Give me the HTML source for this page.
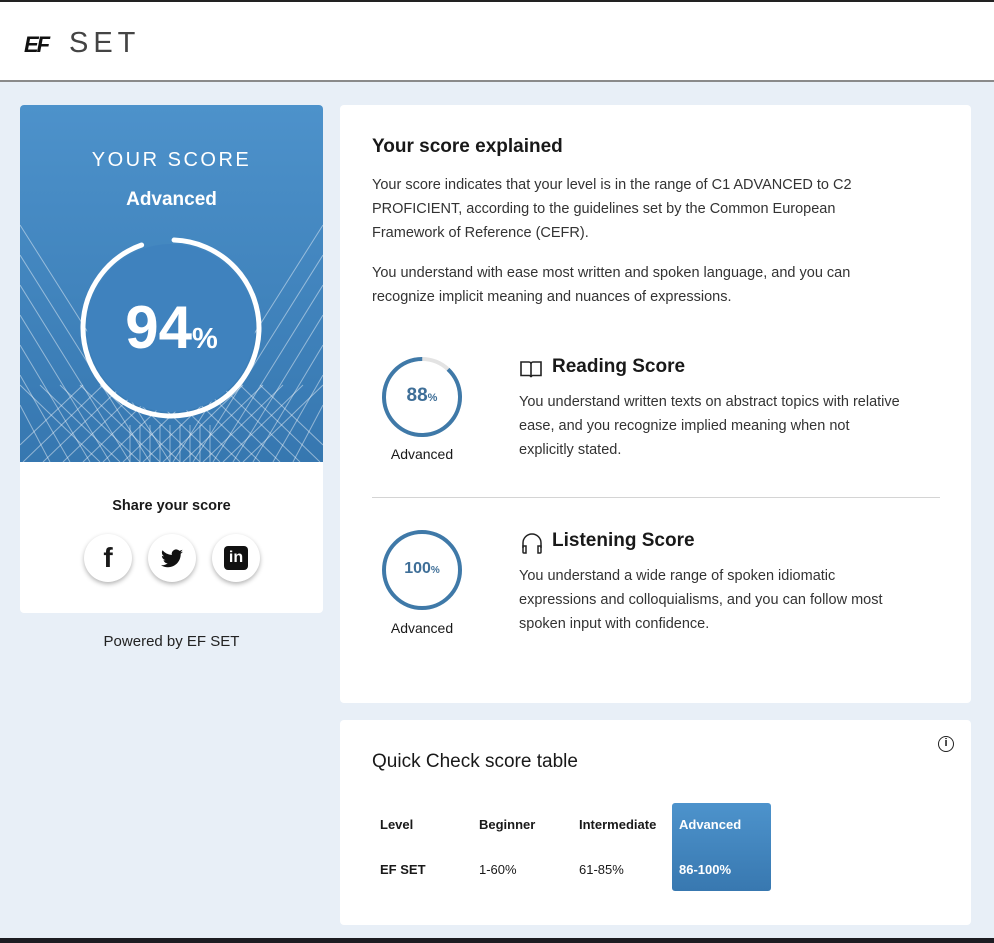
<!DOCTYPE html>
<html><head><meta charset="utf-8"><style>
*{margin:0;padding:0;box-sizing:border-box}
body{width:994px;height:943px;background:#e8eff7;font-family:"Liberation Sans",sans-serif;color:#191919;position:relative;overflow:hidden}
.top{position:absolute;left:0;top:0;width:994px;height:2px;background:#222}
.hdr{position:absolute;left:0;top:2px;width:994px;height:80px;background:#fff;border-bottom:2px solid #8a8a8a}
.card{position:absolute;background:#fff;border-radius:4px}
.p{font-size:14.5px;line-height:24px;color:#333;white-space:nowrap}
.bot{position:absolute;left:0;top:938px;width:994px;height:5px;background:#1c1c22}
</style></head><body>
<div class="top"></div>
<div class="hdr">
 <div style="position:absolute;left:24px;top:30px;font-size:22px;font-weight:bold;font-style:italic;letter-spacing:-2px;color:#111">EF</div>
 <div style="position:absolute;left:69px;top:25px;font-size:29px;font-weight:300;letter-spacing:5px;color:#444">SET</div>
</div>
<div class="card" style="left:20px;top:105px;width:303px;height:508px;overflow:hidden">
 <div style="position:absolute;left:0;top:0;width:303px;height:357px;background:linear-gradient(#4d92cb,#3677b0)">
  <svg width="303" height="357" style="position:absolute;left:0;top:0" stroke="rgba(255,255,255,0.45)" stroke-width="1" fill="none">
   <g>
    <path d="M0 120 L150 357 M0 150 L130 357 M0 180 L110 357 M0 210 L90 357 M0 240 L70 357 M0 270 L50 357 M0 300 L30 357"/>
    <path d="M303 120 L153 357 M303 150 L173 357 M303 180 L193 357 M303 210 L213 357 M303 240 L233 357 M303 270 L253 357 M303 300 L273 357"/>
    <path d="M0 280 L80 357 M20 280 L100 357 M40 280 L120 357 M60 280 L140 357 M80 280 L160 357 M100 280 L180 357 M120 280 L200 357 M140 280 L220 357 M160 280 L240 357 M180 280 L260 357 M200 280 L280 357 M220 280 L300 357 M240 280 L303 340"/>
    <path d="M303 280 L223 357 M283 280 L203 357 M263 280 L183 357 M243 280 L163 357 M223 280 L143 357 M203 280 L123 357 M183 280 L103 357 M163 280 L83 357 M143 280 L63 357 M123 280 L43 357 M103 280 L23 357 M83 280 L3 357 M63 280 L0 340"/>
    <path d="M110 320 V357 M120 320 V357 M130 320 V357 M140 320 V357 M150 320 V357 M160 320 V357 M170 320 V357 M180 320 V357 M190 320 V357"/>
   </g>
  </svg>
  <div style="position:absolute;left:0;width:303px;top:44px;text-align:center;color:#fff;font-size:20px;letter-spacing:2.5px">YOUR SCORE</div>
  <div style="position:absolute;left:0;width:303px;top:84px;text-align:center;color:#fff;font-size:19px;font-weight:bold">Advanced</div>
  <svg width="190" height="190" style="position:absolute;left:56px;top:128px">
   <circle cx="95" cy="95" r="84" fill="#3f82be"/>
   <circle cx="95" cy="95" r="88" fill="none" stroke="#fff" stroke-width="5" stroke-dasharray="519.7 552.9" transform="rotate(-88 95 95)" stroke-linecap="round"/>
  </svg>
  <div style="position:absolute;left:0;width:303px;top:188px;text-align:center;color:#fff;font-weight:bold"><span style="font-size:60px">94</span><span style="font-size:29px">%</span></div>
 </div>
 <div style="position:absolute;left:0;width:303px;top:393px;text-align:center;font-size:14.5px;font-weight:bold">Share your score</div>
 <div style="position:absolute;left:64px;top:429px;width:48px;height:48px;border-radius:50%;background:#fff;box-shadow:0 2px 5px rgba(0,0,0,.3);text-align:center;font-size:28px;font-weight:bold;line-height:48px">f</div>
 <div style="position:absolute;left:128px;top:429px;width:48px;height:48px;border-radius:50%;background:#fff;box-shadow:0 2px 5px rgba(0,0,0,.3)">
  <svg width="24" height="24" viewBox="0 0 24 24" style="position:absolute;left:12px;top:13px"><path fill="#111" d="M23 4.6c-.8.4-1.7.6-2.6.7.9-.6 1.6-1.4 2-2.5-.9.5-1.9.9-2.9 1.1A4.5 4.5 0 0 0 11.8 8 12.8 12.8 0 0 1 2.5 3.3a4.5 4.5 0 0 0 1.4 6c-.7 0-1.4-.2-2-.6 0 2.2 1.6 4 3.6 4.4-.7.2-1.4.2-2 .1.6 1.8 2.2 3.1 4.2 3.1A9 9 0 0 1 1 18.2 12.8 12.8 0 0 0 7.9 20.2c8.3 0 12.8-6.9 12.8-12.8v-.6c.9-.6 1.6-1.4 2.3-2.2z"/></svg>
 </div>
 <div style="position:absolute;left:192px;top:429px;width:48px;height:48px;border-radius:50%;background:#fff;box-shadow:0 2px 5px rgba(0,0,0,.3)">
  <div style="position:absolute;left:12px;top:12px;width:24px;height:24px;border-radius:4px;background:#111;color:#fff;font-weight:bold;font-size:16px;text-align:center;line-height:24px">in</div>
 </div>
</div>
<div style="position:absolute;left:20px;width:303px;top:633px;text-align:center;font-size:15px;color:#222">Powered by EF SET</div>

<div class="card" style="left:340px;top:105px;width:631px;height:598px">
 <div style="position:absolute;left:32px;top:31px;font-size:19px;font-weight:bold">Your score explained</div>
 <div class="p" style="position:absolute;left:32px;top:68px">Your score indicates that your level is in the range of C1 ADVANCED to C2<br>PROFICIENT, according to the guidelines set by the Common European<br>Framework of Reference (CEFR).</div>
 <div class="p" style="position:absolute;left:32px;top:156px">You understand with ease most written and spoken language, and you can<br>recognize implicit meaning and nuances of expressions.</div>
 <svg width="84" height="84" style="position:absolute;left:40px;top:250px">
  <circle cx="42" cy="42" r="38" fill="none" stroke="#e3e3e3" stroke-width="4"/>
  <circle cx="42" cy="42" r="38" fill="none" stroke="#3f79a8" stroke-width="4" stroke-dasharray="210 239" transform="rotate(-46.8 42 42)"/>
 </svg>
 <div style="position:absolute;left:40px;width:84px;top:280px;text-align:center;color:#3f6f98;font-weight:bold"><span style="font-size:19px">88</span><span style="font-size:11px">%</span></div>
 <div style="position:absolute;left:32px;width:100px;top:341px;text-align:center;font-size:14px">Advanced</div>
 <svg width="22" height="20" viewBox="0 0 22 20" style="position:absolute;left:180px;top:254px" fill="none" stroke="#222" stroke-width="1.6"><path d="M1 3h8a2 2 0 0 1 2 2v13a2 2 0 0 0-2-1.5H1z M21 3h-8a2 2 0 0 0-2 2v13a2 2 0 0 1 2-1.5h8z"/></svg>
 <div style="position:absolute;left:212px;top:251px;font-size:19px;font-weight:bold">Reading Score</div>
 <div class="p" style="position:absolute;left:179px;top:285px">You understand written texts on abstract topics with relative<br>ease, and you recognize implied meaning when not<br>explicitly stated.</div>
 <div style="position:absolute;left:32px;top:392px;width:568px;height:1px;background:#d4d4d4"></div>
 <svg width="84" height="84" style="position:absolute;left:40px;top:423px"><circle cx="42" cy="42" r="38" fill="none" stroke="#3f79a8" stroke-width="4"/></svg>
 <div style="position:absolute;left:40px;width:84px;top:455px;text-align:center;color:#3f6f98;font-weight:bold"><span style="font-size:16px">100</span><span style="font-size:10px">%</span></div>
 <div style="position:absolute;left:32px;width:100px;top:515px;text-align:center;font-size:14px">Advanced</div>
 <svg width="24" height="24" viewBox="0 0 24 24" style="position:absolute;left:180px;top:426px" fill="none" stroke="#222" stroke-width="1.5"><path d="M3 17v-5a9 9 0 0 1 18 0v5"/><path d="M3 15h3v7H4a1 1 0 0 1-1-1z M21 15h-3v7h2a1 1 0 0 0 1-1z"/></svg>
 <div style="position:absolute;left:212px;top:425px;font-size:19px;font-weight:bold">Listening Score</div>
 <div class="p" style="position:absolute;left:179px;top:459px">You understand a wide range of spoken idiomatic<br>expressions and colloquialisms, and you can follow most<br>spoken input with confidence.</div>
</div>

<div class="card" style="left:340px;top:720px;width:631px;height:205px">
 <div style="position:absolute;left:598px;top:16px;width:16px;height:16px;border:1.5px solid #222;border-radius:50%;font-size:11px;text-align:center;line-height:13px;font-weight:bold">i</div>
 <div style="position:absolute;left:32px;top:31px;font-size:19px;font-weight:500">Quick Check score table</div>
 <div style="position:absolute;left:332px;top:83px;width:99px;height:88px;border-radius:3px;background:linear-gradient(#4d93cc,#3878b0)"></div>
 <div style="position:absolute;top:97px;left:40px;font-size:13px;font-weight:bold">Level</div>
 <div style="position:absolute;top:97px;left:139px;font-size:13px;font-weight:bold">Beginner</div>
 <div style="position:absolute;top:97px;left:239px;font-size:13px;font-weight:bold">Intermediate</div>
 <div style="position:absolute;top:97px;left:339px;font-size:13px;font-weight:bold;color:#fff">Advanced</div>
 <div style="position:absolute;top:142px;left:40px;font-size:13px;font-weight:bold">EF SET</div>
 <div style="position:absolute;top:142px;left:139px;font-size:13px">1-60%</div>
 <div style="position:absolute;top:142px;left:239px;font-size:13px">61-85%</div>
 <div style="position:absolute;top:142px;left:339px;font-size:13px;font-weight:bold;color:#fff">86-100%</div>
</div>
<div class="bot"></div>
</body></html>
